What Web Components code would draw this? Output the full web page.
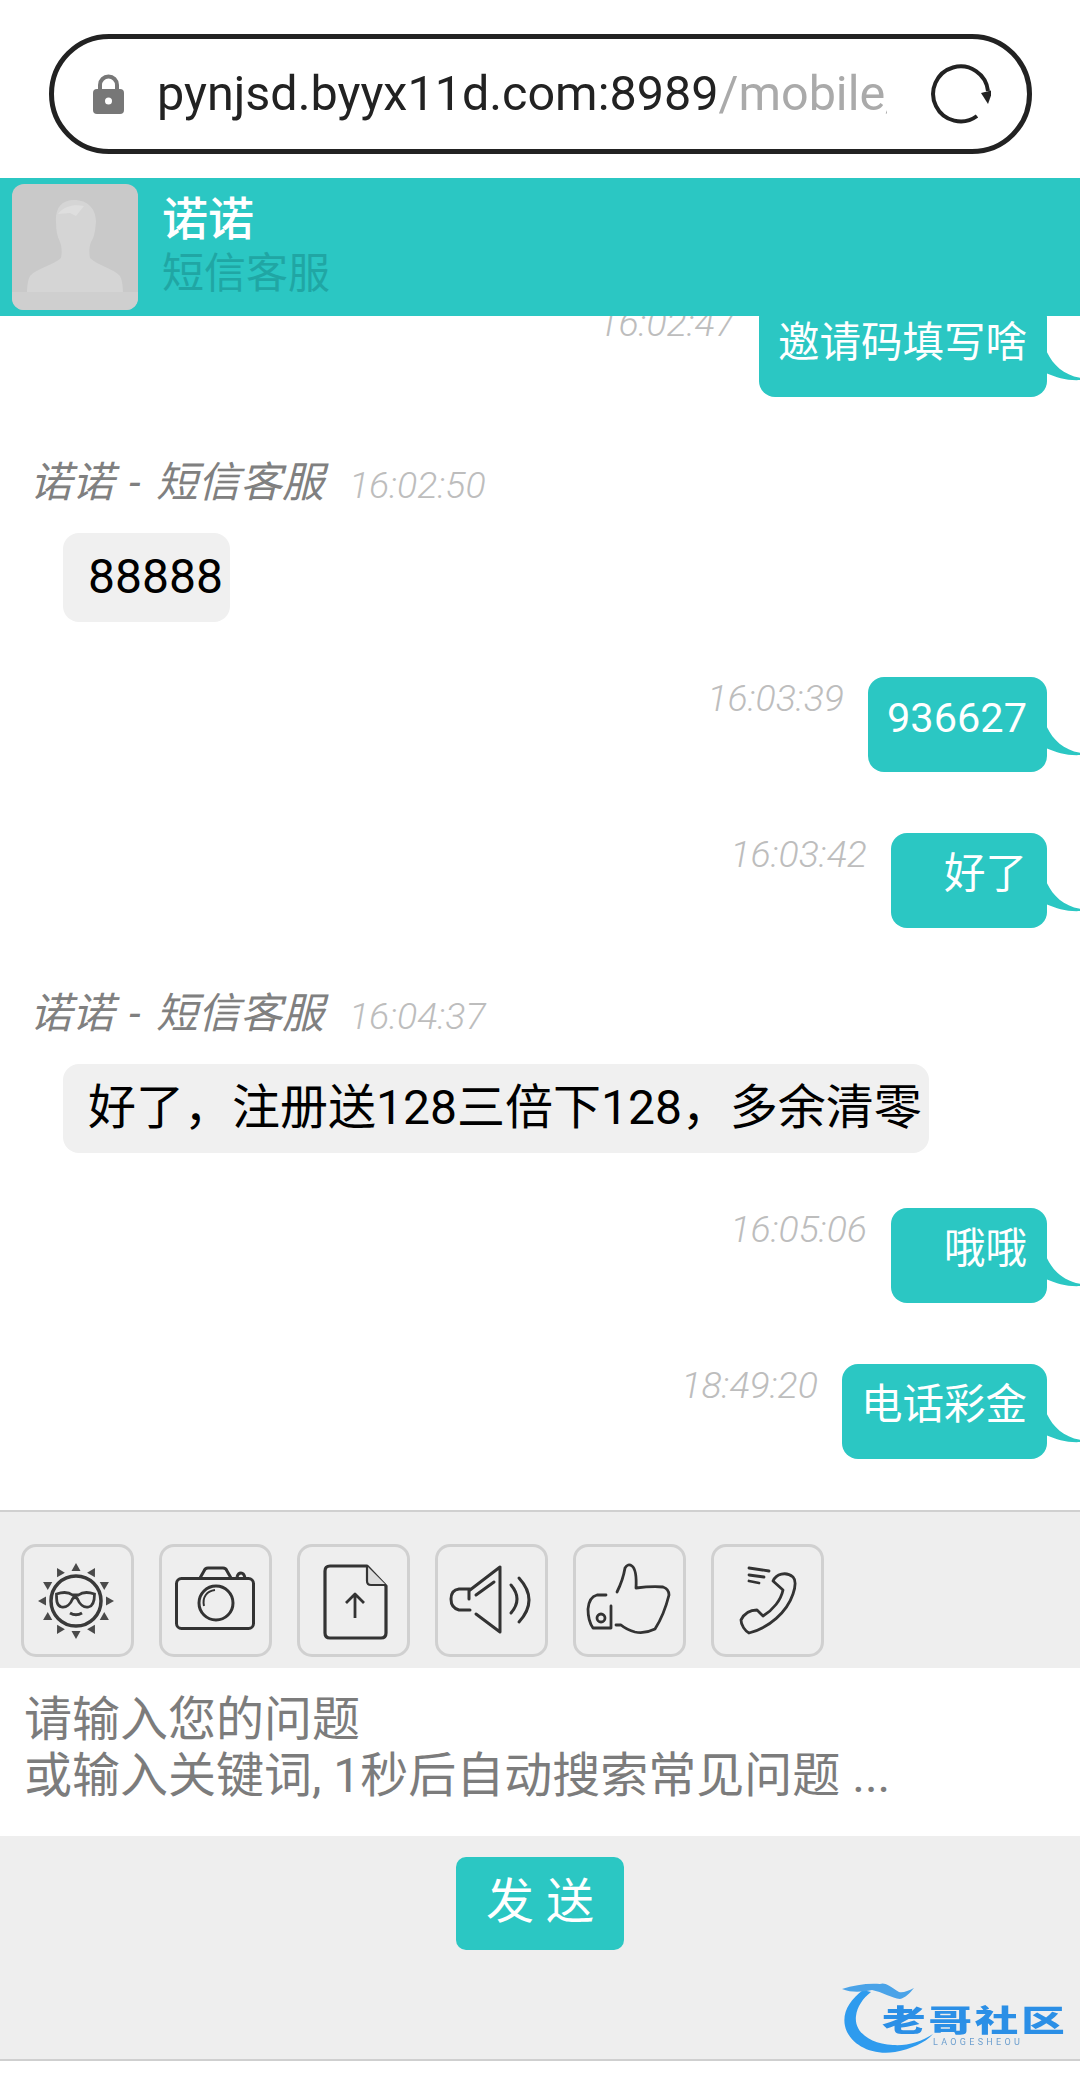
<!DOCTYPE html>
<html lang="zh">
<head>
<meta charset="utf-8">
<title>chat</title>
<style>
  html, body { margin: 0; padding: 0; background: #fff; }
  body { font-family: Roboto, "Noto Sans CJK SC", sans-serif; }
  chat-page { height: 2079px; }
</style>
</head>
<body>

<chat-page>
  <url-bar host="pynjsd.byyx11d.com:8989" path="/mobile/index"></url-bar>
  <chat-header name="诺诺" title="短信客服"></chat-header>
  <chat-list>
    <chat-msg side="me" time="16:02:47">邀请码填写啥</chat-msg>
    <chat-msg who="诺诺 - 短信客服" time="16:02:50">88888</chat-msg>
    <chat-msg side="me" time="16:03:39">936627</chat-msg>
    <chat-msg side="me" time="16:03:42">好了</chat-msg>
    <chat-msg who="诺诺 - 短信客服" time="16:04:37">好了，注册送128三倍下128，多余清零</chat-msg>
    <chat-msg side="me" time="16:05:06">哦哦</chat-msg>
    <chat-msg side="me" time="18:49:20">电话彩金</chat-msg>
  </chat-list>
  <tool-bar>
    <tool-btn>
      <svg viewBox="0 0 113 113" fill="none" stroke="#3a3a3a" stroke-width="3.500">
        <circle cx="55" cy="57" r="25"/>
        <path d="M36 50c6-2 12-2 16 1h6c4-3 10-3 16-1 0 6-1 12-6 13-5 1-9-3-11-8-1-2-4-2-5 0-2 5-6 9-11 8-5-1-5-7-5-13z" stroke-width="2.800" transform="translate(-.5 0)"/>
        <path d="M49 69q6 3.500 12 0" stroke-width="3"/>
        <g fill="#4a4a4a" stroke="none">
          <path d="M55 19l-4.500 8h9z"/>
          <path d="M55 19l-4.500 8h9z" transform="rotate(30 55 57)"/>
          <path d="M55 19l-4.500 8h9z" transform="rotate(60 55 57)"/>
          <path d="M55 19l-4.500 8h9z" transform="rotate(90 55 57)"/>
          <path d="M55 19l-4.500 8h9z" transform="rotate(120 55 57)"/>
          <path d="M55 19l-4.500 8h9z" transform="rotate(150 55 57)"/>
          <path d="M55 19l-4.500 8h9z" transform="rotate(180 55 57)"/>
          <path d="M55 19l-4.500 8h9z" transform="rotate(210 55 57)"/>
          <path d="M55 19l-4.500 8h9z" transform="rotate(240 55 57)"/>
          <path d="M55 19l-4.500 8h9z" transform="rotate(270 55 57)"/>
          <path d="M55 19l-4.500 8h9z" transform="rotate(300 55 57)"/>
          <path d="M55 19l-4.500 8h9z" transform="rotate(330 55 57)"/>
        </g>
      </svg>
    </tool-btn>
    <tool-btn>
      <svg viewBox="0 0 113 113" fill="none" stroke="#333" stroke-width="3" stroke-linejoin="round">
        <rect x="17.500" y="34.500" width="77" height="50" rx="5"/>
        <path d="M41 34l4-7q1-3 4-3h15q3 0 4 3l4 7"/>
        <path d="M78 33q1-4 4-4t4 5"/>
        <circle cx="57" cy="59" r="17"/>
        <path d="M45 62c-2-9 3-15 11-16" stroke-width="2"/>
      </svg>
    </tool-btn>
    <tool-btn>
      <svg viewBox="0 0 113 113" fill="none" stroke="#333" stroke-width="3.200" stroke-linejoin="round">
        <path d="M33 22h37l19 20v47q0 5-5 5H33q-5 0-5-5V27q0-5 5-5z"/>
        <path d="M70 22v15q0 4 4 4h15" fill="#dcdcdc" stroke-width="2.200"/>
        <path d="M58 74V50M49 59l9-9 9 9" stroke-width="2.800"/>
      </svg>
    </tool-btn>
    <tool-btn>
      <svg viewBox="0 0 113 113" fill="none" stroke="#333" stroke-width="3" stroke-linecap="round" stroke-linejoin="round">
        <path d="M35 46l30-23v65L41 70"/>
        <path d="M35 45H24q-8 1-8 10t8 11h11"/>
        <path d="M34 46v9"/>
        <path d="M41 51l18-13"/>
        <path d="M76 41q12 14 0 28"/>
        <path d="M84 34q20 22 0 44"/>
      </svg>
    </tool-btn>
    <tool-btn>
      <svg viewBox="0 0 113 113" fill="none" stroke="#333" stroke-width="2.800" stroke-linecap="round" stroke-linejoin="round">
        <path d="M33 51H24q-8 2-9 14 0 12 5 19h18v-22"/>
        <circle cx="28" cy="74" r="4"/>
        <path d="M44 48q6-12 8-24 3-5 7-2 5 4 4 22 16-2 27-1 6 2 6 8-5 20-14 34-10 5-20 3-8-2-14-7h-5"/>
      </svg>
    </tool-btn>
    <tool-btn>
      <svg viewBox="0 0 113 113" fill="none" stroke="#333" stroke-width="2.800" stroke-linecap="round" stroke-linejoin="round">
        <path d="M38 24l20 3M38 31l15 2M38 37l10 2"/>
        <path d="M62 37c3-7 13-10 20-4 4 4 2 11 0 17-6 18-24 34-44 39-4-2-8-8-8-13 3-6 9-10 16-10l6 6c10-6 18-16 20-26z"/>
      </svg>
    </tool-btn>
  </tool-bar>
  <chat-input>请输入您的问题<br>或输入关键词, 1秒后自动搜索常见问题 ...</chat-input>
  <send-bar label="发 送"><site-logo></site-logo></send-bar>
</chat-page>

<script>
class ChatPage extends HTMLElement {
  constructor() {
    super();
    this.attachShadow({ mode: "open" }).innerHTML = `
      <style>
        :host {
          display: flex; flex-direction: column; width: 1080px; box-sizing: border-box;
          padding-bottom: 18px; overflow: hidden; background: #fff;
        }
      </style>
      <slot></slot>`;
  }
}

class UrlBar extends HTMLElement {
  constructor() {
    super();
    this.attachShadow({ mode: "open" }).innerHTML = `
      <style>
        :host { display: block; flex: none; height: 178px; padding: 34px 48px 0 49px; box-sizing: border-box; }
        .pill {
          display: flex; align-items: center; height: 120px; box-sizing: border-box;
          border: 5px solid #222; border-radius: 60px; padding: 0 39px 0 39px;
        }
        .lock { flex: none; width: 31px; height: 40px; }
        .txt {
          flex: none; width: 730px; margin-left: 33px; overflow: hidden; white-space: nowrap;
          font: 48.500px/62px Roboto, sans-serif; color: #222;
        }
        .txt span { color: #aaa; }
        .re { flex: none; width: 60px; height: 60px; margin-left: 44px; }
      </style>
      <div class="pill">
        <svg class="lock" viewBox="0 0 31 40">
          <path d="M7 17v-6a8.500 8.500 0 0 1 17 0v6" fill="none" stroke="#777" stroke-width="4"/>
          <rect x="0" y="15" width="31" height="25" rx="4" fill="#777"/>
          <circle cx="15.500" cy="27" r="3.500" fill="#fff"/>
        </svg>
        <div class="txt">${this.getAttribute("host")}<span>${this.getAttribute("path")}</span></div>
        <svg class="re" viewBox="0 0 60 60" fill="none">
          <path d="M57 27A27.500 27.500 0 1 0 46 52" stroke="#222" stroke-width="4"/>
          <path d="M50 29l7 11 5-14z" fill="#222"/>
        </svg>
      </div>`;
  }
}

class ChatHeader extends HTMLElement {
  constructor() {
    super();
    this.attachShadow({ mode: "open" }).innerHTML = `
      <style>
        :host {
          display: flex; flex: none; align-items: center; height: 138px; background: #2bc7c3;
          font-family: Roboto, "Noto Sans CJK SC", sans-serif;
        }
        .ava { flex: none; width: 126px; height: 126px; margin-left: 12px; border-radius: 12px; display: block; }
        .who { margin-left: 24px; }
        .name { font-size: 46px; line-height: 54px; color: #fff; font-weight: 500; }
        .sub { font-size: 42px; line-height: 56px; color: #20a6a4; }
      </style>
      <svg class="ava" viewBox="0 0 126 126">
        <rect width="126" height="126" fill="#c9c9c9"/>
        <path d="M62 16c-13 0-19 9-18 22 0 8 1 14 4 20 2 5 2 10 1 16-9 8-24 10-31 18-3 6-3 14-3 21h96c0-7 0-15-3-21-7-8-22-10-30-18-1-6-1-11 1-16 4-6 4-12 5-20 0-13-8-22-22-22z" fill="#d5d5d5"/>
        <path d="M46 30c6-8 16-10 26-8l-8 10-6-3z" fill="#dedede"/>
        <rect y="108" width="126" height="18" fill="#cfcfcf"/>
      </svg>
      <div class="who">
        <div class="name">${this.getAttribute("name")}</div>
        <div class="sub">${this.getAttribute("title")}</div>
      </div>`;
  }
}

class ChatList extends HTMLElement {
  constructor() {
    super();
    // messages stick to the bottom, the oldest one runs under the header
    this.attachShadow({ mode: "open" }).innerHTML = `
      <style>
        :host {
          display: flex; flex: 1; min-height: 0; flex-direction: column; justify-content: flex-end;
          overflow: hidden; padding-bottom: 45px; background: #fff;
        }
      </style>
      <slot></slot>`;
  }
}

class ChatMsg extends HTMLElement {
  constructor() {
    super();
    const root = this.attachShadow({ mode: "open" });
    const time = this.getAttribute("time");
    const css = `
      .t { font: italic 300 37.500px/42px Roboto, sans-serif; color: #bdbdbd; white-space: nowrap; }
      .b { border-radius: 16px; box-sizing: border-box; white-space: nowrap; }
    `;
    if (this.getAttribute("side") === "me") {
      root.innerHTML = `
        <style>
          :host { display: flex; flex: none; justify-content: flex-end; align-items: flex-start; margin: 55px 33px 6px 0; }
          ${css}
          .t { margin-right: 24px; }
          .b {
            position: relative; min-width: 156px; min-height: 95px; padding: 18px 20px 31px 19px; text-align: right;
            background: #2bc7c3; color: #fff; font: 41.500px/46px Roboto, "Noto Sans CJK SC", sans-serif;
          }
          .tail { position: absolute; left: 100%; top: 48px; width: 34px; height: 32px; }
        </style>
        <span class="t">${time}</span>
        <div class="b"><slot></slot>
          <svg class="tail" viewBox="0 0 34 32"><path d="M-1 0C5 14 16 25 34 28v2C20 31 9 27-1 23z" fill="#2bc7c3"/></svg>
        </div>`;
    } else {
      root.innerHTML = `
        <style>
          :host { display: block; flex: none; margin: 55px 0 0 0; }
          ${css}
          .top { display: flex; align-items: center; height: 50px; padding-left: 30px; }
          .n { font: italic 42px/50px Roboto, "Noto Sans CJK SC", sans-serif; color: #808080; white-space: nowrap; word-spacing: 5px; }
          .t { margin-left: 25px; margin-top: 4px; }
          .b {
            display: inline-block; margin: 25px 0 0 63px; padding: 21px 7px 22px 25px;
            background: #f0f0f0; color: #000; font: 48px/46px Roboto, "Noto Sans CJK SC", sans-serif; vertical-align: top;
          }
        </style>
        <div class="top"><span class="n">${this.getAttribute("who")}</span><span class="t">${time}</span></div>
        <div class="b"><slot></slot></div>`;
    }
  }
}

class ToolBar extends HTMLElement {
  constructor() {
    super();
    this.attachShadow({ mode: "open" }).innerHTML = `
      <style>
        :host {
          display: flex; flex: none; gap: 25px; height: 158px; box-sizing: border-box;
          padding: 32px 21px 0 21px; background: #eee; border-top: 2px solid #d0d0d0;
        }
      </style>
      <slot></slot>`;
  }
}

class ToolBtn extends HTMLElement {
  constructor() {
    super();
    this.attachShadow({ mode: "open" }).innerHTML = `
      <style>
        :host {
          display: block; flex: none; width: 113px; height: 113px; box-sizing: border-box;
          border: 3px solid #d0d0d0; border-radius: 15px; background: #eee; overflow: hidden;
        }
        ::slotted(svg) { display: block; width: 113px; height: 113px; margin: -3px; }
      </style>
      <slot></slot>`;
  }
}

class ChatInput extends HTMLElement {
  constructor() {
    super();
    this.attachShadow({ mode: "open" }).innerHTML = `
      <style>
        :host {
          display: block; flex: none; height: 168px; box-sizing: border-box; padding: 24px 0 0 24px;
          background: #fff; color: #7c7c7c; white-space: nowrap;
          font: 48px/56px Roboto, "Noto Sans CJK SC", sans-serif;
        }
      </style>
      <slot></slot>`;
  }
}

class SendBar extends HTMLElement {
  constructor() {
    super();
    this.attachShadow({ mode: "open" }).innerHTML = `
      <style>
        :host {
          display: flex; flex: none; flex-direction: column; height: 225px; box-sizing: border-box;
          padding-top: 21px; background: #eee; border-bottom: 2px solid #cfcfcf;
        }
        .btn {
          align-self: center; width: 168px; height: 93px; border-radius: 10px;
          background: #2bc7c3; color: #fff; text-align: center;
          font: 48px/90px Roboto, "Noto Sans CJK SC", sans-serif;
        }
        .end { display: flex; justify-content: flex-end; margin-top: 32px; padding-right: 15px; }
      </style>
      <div class="btn">${this.getAttribute("label")}</div>
      <div class="end"><slot></slot></div>`;
  }
}

class SiteLogo extends HTMLElement {
  constructor() {
    super();
    this.attachShadow({ mode: "open" }).innerHTML = `
      <style>
        :host {
          display: block; position: relative; width: 223px; height: 74px;
          font-family: "Noto Sans CJK SC", sans-serif; filter: blur(.6px);
        }
        svg { position: absolute; left: 0; top: 0; width: 100px; height: 74px; }
        .cn {
          position: absolute; left: 40px; top: 19px; white-space: nowrap; transform: scaleX(1.45); transform-origin: left top;
          font-size: 30px; line-height: 34px; font-weight: 900; letter-spacing: 2px; color: #2b8fe6;
        }
        .en {
          position: absolute; left: 91px; top: 55px; white-space: nowrap;
          font: 9px/11px Roboto, sans-serif; letter-spacing: 3.300px; color: #6d9fce;
        }
      </style>
      <svg viewBox="0 0 100 74">
        <path d="M21 8C8 18 0 30 3 44c4 18 26 30 50 26 16-3 30-9 38-18-12 8-26 12-40 11C28 62 12 50 14 34c1-9 7-18 15-24z" fill="#2e9bee"/>
        <path d="M0 7c10 4 20 3 30 1 10 2 20 8 28 9 5-1 10-6 14-11-6 3-11 5-15 4C47 3 42 0 38 2 26 1 12 3 0 7z" fill="#4aa3e8"/>
      </svg>
      <div class="cn">老哥社区</div>
      <div class="en">LAOGESHEOU</div>`;
  }
}

customElements.define("chat-page", ChatPage);
customElements.define("url-bar", UrlBar);
customElements.define("chat-header", ChatHeader);
customElements.define("chat-list", ChatList);
customElements.define("chat-msg", ChatMsg);
customElements.define("tool-bar", ToolBar);
customElements.define("tool-btn", ToolBtn);
customElements.define("chat-input", ChatInput);
customElements.define("send-bar", SendBar);
customElements.define("site-logo", SiteLogo);
</script>
</body>
</html>
